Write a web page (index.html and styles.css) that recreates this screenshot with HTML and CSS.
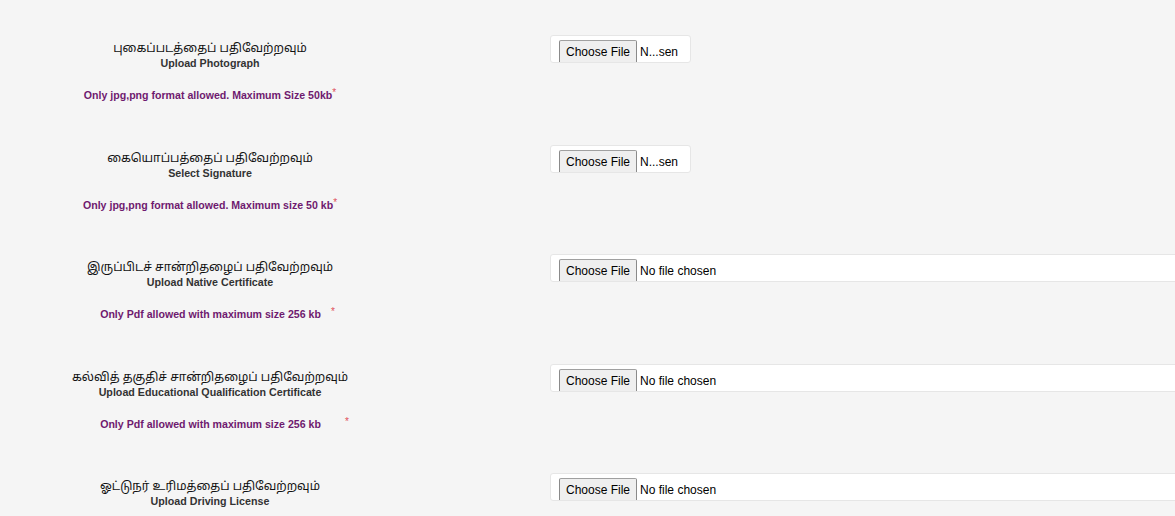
FILE: index.html
```html
<!DOCTYPE html>
<html lang="ta">
<head>
<meta charset="utf-8">
<title>Upload Documents</title>
<link rel="stylesheet" href="styles.css">
</head>
<body>
<div class="form">
  <div class="row">
    <div class="label-col">
      <div class="ta">புகைப்படத்தைப் பதிவேற்றவும்</div>
      <div class="en">Upload Photograph</div>
      <div class="note">Only jpg,png format allowed. Maximum Size 50kb<span class="req">*</span></div>
    </div>
    <div class="field-col">
      <div class="file-box narrow"><span class="file-btn">Choose File</span><span class="file-name">N...sen</span></div>
    </div>
  </div>
  <div class="row">
    <div class="label-col">
      <div class="ta">கையொப்பத்தைப் பதிவேற்றவும்</div>
      <div class="en">Select Signature</div>
      <div class="note">Only jpg,png format allowed. Maximum size 50 kb<span class="req">*</span></div>
    </div>
    <div class="field-col">
      <div class="file-box narrow"><span class="file-btn">Choose File</span><span class="file-name">N...sen</span></div>
    </div>
  </div>
  <div class="row">
    <div class="label-col">
      <div class="ta">இருப்பிடச் சான்றிதழைப் பதிவேற்றவும்</div>
      <div class="en">Upload Native Certificate</div>
      <div class="note">Only Pdf allowed with maximum size 256 kb<span class="req req-gap">*</span></div>
    </div>
    <div class="field-col">
      <div class="file-box wide"><span class="file-btn">Choose File</span><span class="file-name">No file chosen</span></div>
    </div>
  </div>
  <div class="row">
    <div class="label-col">
      <div class="ta">கல்வித் தகுதிச் சான்றிதழைப் பதிவேற்றவும்</div>
      <div class="en">Upload Educational Qualification Certificate</div>
      <div class="note">Only Pdf allowed with maximum size 256 kb<span class="req req-gap-wide">*</span></div>
    </div>
    <div class="field-col">
      <div class="file-box wide"><span class="file-btn">Choose File</span><span class="file-name">No file chosen</span></div>
    </div>
  </div>
  <div class="row">
    <div class="label-col">
      <div class="ta">ஓட்டுநர் உரிமத்தைப் பதிவேற்றவும்</div>
      <div class="en">Upload Driving License</div>
    </div>
    <div class="field-col">
      <div class="file-box wide"><span class="file-btn">Choose File</span><span class="file-name">No file chosen</span></div>
    </div>
  </div>
</div>
</body>
</html>
```
FILE: styles.css
```css
html, body {
  margin: 0;
  padding: 0;
  background: #f5f5f5;
  overflow: hidden;
}
body {
  font-family: "Liberation Sans", Arial, "Noto Sans", sans-serif;
  color: #000;
}
.form {
  display: flex;
  flex-direction: column;
}
.row {
  display: flex;
  height: 109.5px;
  box-sizing: border-box;
  padding-top: 35px;
}
.label-col {
  width: 420px;
  flex: none;
  text-align: center;
  padding-top: 4px;
}
.ta {
  font-family: "Latha", "Noto Sans Tamil", "Lohit Tamil", "Liberation Sans", "Noto Sans", sans-serif;
  font-size: 12px;
  line-height: 16px;
  padding-top: 2px;
  margin-bottom: -2px;
  color: #111;
}
.en {
  font-size: 10.7px;
  font-weight: bold;
  line-height: 16px;
  color: #333;
}
.note {
  margin-top: 16px;
  font-size: 10.6px;
  font-weight: bold;
  line-height: 16px;
  color: #6f1a6f;
}
.req {
  color: #e0505a;
  font-size: 10px;
  font-weight: normal;
  vertical-align: top;
  line-height: 12px;
}
.req-gap {
  margin-left: 10px;
  margin-right: -15px;
}
.req-gap-wide {
  margin-left: 24px;
  margin-right: -29px;
}
.field-col {
  margin-left: 130px;
  flex: none;
}
.file-box {
  display: flex;
  align-items: flex-start;
  box-sizing: border-box;
  height: 28px;
  padding: 4px 0 0 8px;
  background: #fff;
  border: 1px solid #e6e6e6;
  border-radius: 3px;
  overflow: hidden;
  font-size: 12px;
}
.narrow { width: 141px; }
.wide { width: 700px; }
.file-btn {
  box-sizing: border-box;
  height: 24px;
  padding: 2px 6px 0 6px;
  background: #efefef;
  border: 1px solid #8a8a8a;
  border-top-color: #a0a0a0;
  border-radius: 2px 2px 0 0;
  line-height: 18px;
  color: #000;
}
.file-name {
  margin-left: 3px;
  padding-top: 3px;
  line-height: 18px;
  color: #000;
}
```
